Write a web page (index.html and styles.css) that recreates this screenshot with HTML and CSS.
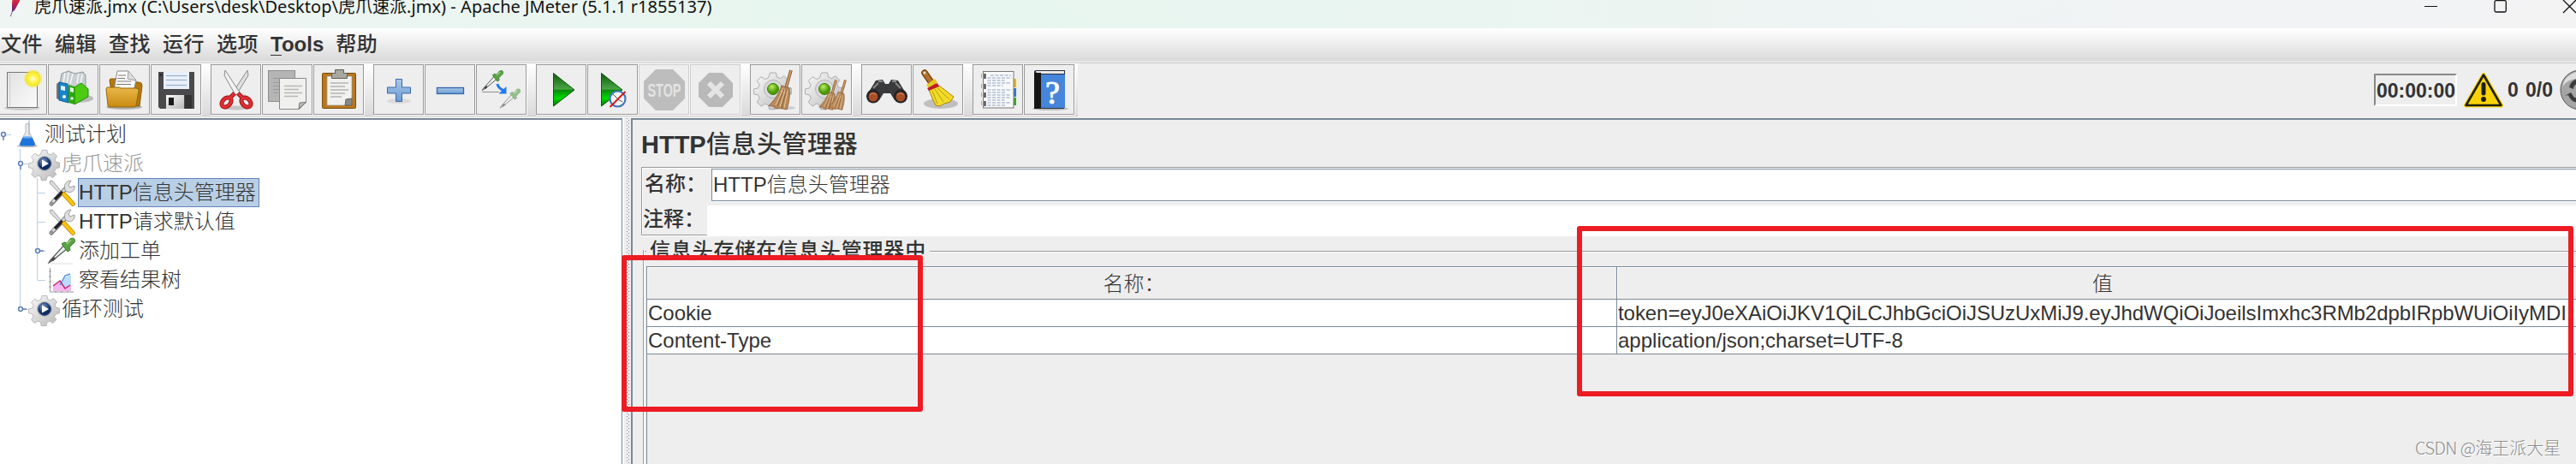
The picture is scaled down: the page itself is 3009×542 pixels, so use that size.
FILE: index.html
```html
<!DOCTYPE html>
<html lang="zh-CN">
<head>
<meta charset="utf-8">
<title>Apache JMeter</title>
<link rel="stylesheet" href="styles.css">
</head>
<body>
<svg width="0" height="0" class="defs">
  <defs>
    <linearGradient id="paper" x1="0" y1="0" x2="1" y2="1"><stop offset="0" stop-color="#e2e2e2"/><stop offset="1" stop-color="#fbfbfb"/></linearGradient>
    <linearGradient id="gold" x1="0" y1="0" x2="0" y2="1"><stop offset="0" stop-color="#e9b84a"/><stop offset="1" stop-color="#c98a10"/></linearGradient>
    <linearGradient id="green" x1="0" y1="0" x2="0" y2="1"><stop offset="0" stop-color="#0d5a0d"/><stop offset=".48" stop-color="#4aa544"/><stop offset=".52" stop-color="#0a8a0a"/><stop offset=".75" stop-color="#00d800"/><stop offset="1" stop-color="#067006"/></linearGradient>
    <linearGradient id="blue" x1="0" y1="0" x2="0" y2="1"><stop offset="0" stop-color="#a9c8ea"/><stop offset="1" stop-color="#6b9bd4"/></linearGradient>
    <linearGradient id="gray" x1="0" y1="0" x2="1" y2="1"><stop offset="0" stop-color="#fafafa"/><stop offset="1" stop-color="#b8b8b8"/></linearGradient>
    <radialGradient id="glow"><stop offset="0" stop-color="#fffff0"/><stop offset=".35" stop-color="#fff650"/><stop offset=".75" stop-color="#f2e630"/><stop offset="1" stop-color="#f2e630" stop-opacity="0"/></radialGradient>
    <radialGradient id="lime" cx=".4" cy=".3"><stop offset="0" stop-color="#b8f060"/><stop offset="1" stop-color="#4c9c08"/></radialGradient>
    <radialGradient id="navy" cx=".4" cy=".3"><stop offset="0" stop-color="#7f9fcc"/><stop offset="1" stop-color="#0f2c62"/></radialGradient>
    <linearGradient id="feather" x1="0" y1="0" x2="0" y2="1"><stop offset="0" stop-color="#e8443a"/><stop offset=".5" stop-color="#c41f4e"/><stop offset="1" stop-color="#5a2a86"/></linearGradient>
    <g id="cog">
      <path d="M-3.500-19h7l1 5 4 1.600 4.300-3 5 5-3 4.300 1.600 4 5 1v7l-5 1-1.600 3-1 1 3 4.300-5 5-4.300-3-4 1.600-1 5h-7l-1-5-4-1.600-4.300 3-5-5 3-4.300-1.600-4-5-1v-6l5-1 1.600-4-3-4.300 5-5 4.300 3 4-1.600z" fill="url(#gray)" stroke="#adadad"/>
      <circle r="10.500" fill="#dadada" stroke="#b4b4b4"/>
    </g>
    <g id="broom">
      <path d="M25 0l-6 21" stroke="#7f532c" stroke-width="3.600"/><path d="M25 0l-6 21" stroke="#d2a06c" stroke-width="1.800"/>
      <path d="M14 18l9 3c1 8 0 16-3 25l-8-2-4 1-4-3-5-.5c7-7 12-14 15-23.500z" fill="#b88a5c" stroke="#84592f" stroke-width=".8"/>
      <path d="M16 21l-9 20M18 22l-6 21M21 23l-4 21M13 24l6 3" stroke="#e8c69c" fill="none"/><path d="M17 22l-8 20M20 22l-6 22" stroke="#79502b" stroke-width=".7" fill="none"/>
    </g>
    <g id="tools">
      <path d="M2 3l3-1 11 13-2 2L3 6z" fill="#ddd" stroke="#8a8a8a" stroke-width=".8"/>
      <path d="M4 29L22 10" stroke="#777" stroke-width="5" stroke-linecap="round"/><path d="M4 28.500L22 10" stroke="#d8d8d8" stroke-width="3" stroke-linecap="round"/>
      <path d="M8 24l9-9" stroke="#222" stroke-width="3.600"/>
      <path d="M20 13c-2-6 1-11 7-11l-3 5 2 3 5-2c1 6-4 9-9 7z" fill="#e0e0e0" stroke="#888" stroke-width=".8"/>
      <path d="M19 18l10 11" stroke="#b88300" stroke-width="5.500" stroke-linecap="round"/><path d="M19 18l10 11" stroke="#fbc40e" stroke-width="4" stroke-linecap="round"/>
      <circle cx="4.500" cy="28" r="1.500" fill="#888"/>
    </g>
    <g id="gearplay">
      <use href="#cog" transform="translate(16 16) scale(.82)"/>
      <circle cx="16" cy="16" r="7.500" fill="url(#navy)" stroke="#3a5688"/><path d="M13 11.500l8 4.500-8 4.500z" fill="#fff"/>
    </g>
    <g id="pipette">
      <path d="M2 28L19 9l4 4L6 27l-5 3z" fill="#e8eeee" stroke="#555" stroke-width="1.200"/>
      <path d="M3 27l4-4 2 2-3 3z" fill="#444"/>
      <path d="M16 8l3-2 3 1 4-5c3-2 7 0 5 4l-6 6 1 3-3 2z" fill="#5aa444" stroke="#397a2c"/><path d="M22 8l5-5" stroke="#a5d890" stroke-width="1.500"/>
    </g>
  </defs>
</svg>

<header class="titlebar">
  <svg class="app-logo" viewBox="0 0 40 33"><path d="M17-6c6 0 8 4 5 9l-5 9-3 2 0-5c0-6 0-11 3-15z" fill="url(#feather)"/><path d="M14.500 13l-2 6" stroke="#5a2a86" stroke-width="1.200" stroke-dasharray="1.500 1"/></svg>
  <h1 class="app-title">虎爪速派.jmx (C:\Users\desk\Desktop\虎爪速派.jmx) - Apache JMeter (5.1.1 r1855137)</h1>
  <svg class="win-buttons" viewBox="2829 0 180 33" fill="none" stroke="#111"><path d="M2832 7.500h15"/><rect x="2914" y=".7" width="13.300" height="13.300" rx="1.500" stroke-width="1.300"/><path d="M2994 0l15 15M3009 0l-15 15" stroke-width="1.300"/></svg>
</header>

<nav class="menubar">
  <span>文件</span><span>编辑</span><span>查找</span><span>运行</span><span>选项</span><span class="latin"><u>T</u>ools</span><span>帮助</span>
</nav>

<div class="toolbar">
  <div class="tools">
  <div class="group first">
    <button class="tool cut"><svg viewBox="0 75 55 59"><ellipse cx="26" cy="126" rx="21" ry="3" fill="#aaa" opacity=".5"/><rect x="8.500" y="84.500" width="35" height="41" fill="url(#paper)" stroke="#777"/><path d="M11.500 86v38" stroke="#ccc"/><circle cx="38.500" cy="92" r="11" fill="url(#glow)"/></svg></button>
    <button class="tool"><svg viewBox="56 75 59 59"><ellipse cx="91" cy="115" rx="18" ry="5" fill="#888" opacity=".5"/><path d="M70 98l2-12 8-3 7 3 10-2 3 4v14l-16 2z" fill="#c9d0d4" stroke="#8d9498"/><path d="M74 97l2-12M78 98l2-13M82 98l3-12M90 97l2-11M94 98l2-11" stroke="#f6f6f6" stroke-width="1.500"/><path d="M66 98l4-3v22l-4-2z" fill="#777"/><path d="M69 96l10 2 1 22-11-3z" fill="#1785cc" stroke="#0e5f99"/><path d="M71 100l5 1v5l-5-1z" fill="#e8f4ff"/><circle cx="75" cy="113" r="2" fill="#fff"/><path d="M80 99l7 2v21l-7-2z" fill="#2aa80e"/><path d="M87 102l8-5 8 7v9l-16 9z" fill="#4dcb10" stroke="#248e0c"/><path d="M82 102l4 1v5l-4-1z" fill="#eaffdf"/><circle cx="84" cy="115" r="1.800" fill="#eaffdf"/></svg></button>
    <button class="tool"><svg viewBox="116 75 59 59"><ellipse cx="145" cy="125" rx="21" ry="3" fill="#888" opacity=".6"/><path d="M128 94q0-2 2-2h10l3 4h19q4 0 4 4l-3 24h-30z" fill="#b3790e" stroke="#8a5c08"/><path d="M137 83h13l9 11-3 12h-23z" fill="#fcfcfc" stroke="#888"/><path d="M150 83l-1 9 9 2" fill="#ddd" stroke="#999"/><path d="M138 88h9M137 91.500h9M137 95h16M136 98.500h17" stroke="#777"/><path d="M124 104q0-2 2-2h12q2 0 3 1h18q3 0 3 3l-3 17q0 2-2 2h-29q-2 0-2-2z" fill="url(#gold)" stroke="#94650b"/></svg></button>
    <button class="tool"><svg viewBox="176 75 59 59"><path d="M185 84h42v43h-40l-2-2z" fill="#4a4a4d"/><path d="M191 84h30v20h-30z" fill="#e8eff8"/><path d="M194 88.500h24M194 93.500h24M194 99.500h24" stroke="#8ea9c8"/><path d="M194 111h21v16h-21z" fill="url(#gray)"/><path d="M197 114h6v9h-6z" fill="#1b1b1b"/><path d="M216 111h8v16h-8z" fill="#333"/><path d="M186.500 86.500h3v2h-3z" fill="#222"/></svg></button>
  </div>
  <div class="group">
    <button class="tool"><svg viewBox="246 75 59 59"><ellipse cx="276" cy="126" rx="14" ry="2.500" fill="#aaa" opacity=".6"/><path d="M289 82l1 6-14 23-4-3z" fill="#dfe1e1" stroke="#8a8a8a"/><path d="M263 82l-1 6 13 23 5-3z" fill="#f2f2f2" stroke="#8a8a8a"/><g fill="none" stroke="#a30f14" stroke-width="5"><ellipse cx="264.500" cy="119.500" rx="4.500" ry="6.500" transform="rotate(45 264.500 119.500)"/><ellipse cx="287.500" cy="119.500" rx="4.500" ry="6.500" transform="rotate(-45 287.500 119.500)"/><path d="M269 114l5-5M283 114l-5-5"/></g><g fill="none" stroke="#e03034" stroke-width="3"><ellipse cx="264.500" cy="119.500" rx="4.500" ry="6.500" transform="rotate(45 264.500 119.500)"/><ellipse cx="287.500" cy="119.500" rx="4.500" ry="6.500" transform="rotate(-45 287.500 119.500)"/><path d="M269 114l5-5M283 114l-5-5"/></g></svg></button>
    <button class="tool"><svg viewBox="306 75 59 59"><rect x="313.500" y="82.500" width="31" height="36" fill="#b5b5b5" stroke="#8d8d8d"/><path d="M319 91.500h8M319 96.500h8M319 100.500h7M319 104.500h7M319 108.500h6" stroke="#999"/><path d="M326.500 91.500h31v28l-8 8h-23z" fill="#f0f0ee" stroke="#888"/><path d="M332 100.500h21M332 104.500h17M332 108.500h21M332 112.500h16" stroke="#b8b8b8" stroke-width="1.500"/><path d="M349 127l1-7 7.500-.5z" fill="#bbb" stroke="#777"/></svg></button>
    <button class="tool"><svg viewBox="366 75 59 59"><rect x="376.500" y="85.500" width="39" height="41" rx="1" fill="#b9771e" stroke="#7a4c0c"/><path d="M382 89h29v28l-7 6h-22z" fill="#f1f1ef" stroke="#999" stroke-width=".7"/><path d="M386 97h21M386 101h17M386 105h21M386 109h17M386 113h13" stroke="#b4b4b4" stroke-width="1.500"/><path d="M403 123l1-7 7-1v8z" fill="#888" stroke="#666"/><path d="M387.500 91.500v-6h4v-4h10v4h4v6z" fill="#a8a8a0" stroke="#5e5e58"/></svg></button>
  </div>
  <div class="group">
    <button class="tool"><svg viewBox="436 75 59 59"><ellipse cx="466" cy="118" rx="14" ry="3" fill="#bbb" opacity=".4"/><path d="M462.500 92.500h7v9.500h10v7h-10v9.500h-7v-9.500h-10v-7h10z" fill="url(#blue)" stroke="#3a68a8"/></svg></button>
    <button class="tool"><svg viewBox="496 75 59 59"><rect x="510.500" y="102.500" width="31" height="7" fill="url(#blue)" stroke="#3566a8" stroke-width="1.300"/></svg></button>
    <button class="tool"><svg viewBox="556 75 59 59"><path d="M563 107.500h20" stroke="#777" stroke-width=".8"/><use href="#pipette" transform="translate(562.500 81.500) scale(.8)"/><use href="#pipette" transform="translate(583.500 103) scale(.77)" opacity=".6"/><path d="M581 98q1 5 7 7.500" stroke="#1f7af0" stroke-width="3" fill="none"/><path d="M591.500 101v8.500h-9z" fill="#1f7af0"/></svg></button>
  </div>
  <div class="group">
    <button class="tool"><svg viewBox="626 75 59 59"><path d="M646.500 85.500l24.500 19.500-24.500 19z" fill="url(#green)" stroke="#0a5a0a"/></svg></button>
    <button class="tool"><svg viewBox="686 75 59 59"><path d="M702.500 85.500l24.500 19.500-24.500 19z" fill="url(#green)" stroke="#0a5a0a"/><circle cx="721.500" cy="115.500" r="9" fill="#f3f3f3" stroke="#3f77bb" stroke-width="2.200"/><path d="M716 110l6 6 5 3" stroke="#555" fill="none"/><path d="M712.500 125l18-18" stroke="#d91212" stroke-width="1.800"/></svg></button>
    <button class="tool off"><svg viewBox="746 75 59 59"><path d="M766 81h20l14 14v20l-14 14h-20l-14-14v-20z" fill="#bdbdbd"/><text x="776" y="113" text-anchor="middle" textLength="39" lengthAdjust="spacingAndGlyphs" class="stop">STOP</text></svg></button>
    <button class="tool off"><svg viewBox="806 75 59 59"><path d="M828 85h16l12 12v16l-12 12h-16l-12-12v-16z" fill="#b9b9b9"/><path d="M828 97l16 16M844 97l-16 16" stroke="#e4e4e4" stroke-width="6"/></svg></button>
  </div>
  <div class="group">
    <button class="tool"><svg viewBox="876 75 59 59"><use href="#cog" transform="translate(903 104)"/><circle cx="903" cy="104" r="6.500" fill="url(#lime)" stroke="#3d7d08"/><ellipse cx="916" cy="126" rx="13" ry="2" fill="#999" opacity=".4"/><use href="#broom" transform="translate(899 82)"/></svg></button>
    <button class="tool"><svg viewBox="936 75 59 59"><use href="#cog" transform="translate(963 104)"/><circle cx="963" cy="104" r="6.500" fill="url(#lime)" stroke="#3d7d08"/><use href="#broom" transform="translate(957.500 93.500) scale(.76)"/><use href="#broom" transform="translate(968.500 93.500) scale(.76)"/></svg></button>
  </div>
  <div class="group">
    <button class="tool"><svg viewBox="1006 75 59 59"><path d="M1012 112l11-18 8-1 3 5h4l3-5 8 1 11 18-3 7-12-2-5-8h-8l-5 8-12 2z" fill="#3a3a3d"/><path d="M1026 95l5 0M1042 95l5 0M1020 103l6-6M1052 103l-6-6" stroke="#888" stroke-width="2"/><circle cx="1020" cy="112.500" r="8" fill="#242426"/><circle cx="1052" cy="112.500" r="8" fill="#242426"/><circle cx="1020" cy="113" r="5.500" fill="#a94e26"/><circle cx="1052" cy="113" r="5.500" fill="#a94e26"/><path d="M1016 111q4-4 8 0M1048 111q4-4 8 0" stroke="#d98a60" fill="none"/></svg></button>
    <button class="tool"><svg viewBox="1066 75 59 59"><ellipse cx="1099" cy="121" rx="20" ry="6" fill="#999" opacity=".55"/><path d="M1080 85l9 13" stroke="#704010" stroke-width="7.500" stroke-linecap="round"/><path d="M1080 85l9 13" stroke="#b4702a" stroke-width="5" stroke-linecap="round"/><path d="M1082 99l10-7 3 4-10 7z" fill="#e8c820"/><path d="M1085 105l12-5 17 13-4 6-7 2-5 3-5-1-3-6z" fill="#f2dc28" stroke="#a8860a"/><path d="M1089 106l6 15M1092 104l10 15M1095 103l14 13" stroke="#b99a10"/><path d="M1083 103l12-6 2 4-12 5z" fill="#c01a28"/><circle cx="1080" cy="85" r="1.500" fill="#f6e8d0"/></svg></button>
  </div>
  <div class="group">
    <button class="tool"><svg viewBox="1136 75 59 59"><path d="M1184 92h3v10h-3z" fill="#edb414"/><path d="M1184 103h3v10h-3z" fill="#2c7be0"/><path d="M1184 114h3v9h-3z" fill="#2eac22"/><rect x="1148.500" y="83.500" width="35.500" height="42.500" fill="#f8f8f8" stroke="#777"/><path d="M1157 88h24M1153.500 91h28M1153.500 94h20M1153.500 97h27M1153.500 100h18M1153.500 105h28M1153.500 108h22M1153.500 111h27M1153.500 114h26M1153.500 117h20M1153.500 120h27M1153.500 123h22" stroke="#8ba1c2" stroke-dasharray="4 1.500" stroke-width="1"/><path d="M1150.500 86v6M1150.500 98v6M1150.500 108v6M1150.500 118v6" stroke="#333" stroke-width="2"/><path d="M1146.500 86v5M1146.500 98v5M1146.500 108v5M1146.500 118v5" stroke="#aaa"/></svg></button>
    <button class="tool"><svg viewBox="1196 75 59 59"><ellipse cx="1227" cy="127" rx="21" ry="2" fill="#999" opacity=".6"/><path d="M1208 83l2-1h34v4l-1 41h-35z" fill="#26303e"/><path d="M1210 83h33v3h-32z" fill="#e9e9e9"/><path d="M1216 87h28v39h-28z" fill="#4585da"/><path d="M1208 85h8v42h-8z" fill="#161616"/><text x="1229.500" y="121" text-anchor="middle" class="qmark">?</text></svg></button>
  </div>
  </div>
  <div class="status">
    <span class="timer">00:00:00</span>
    <svg class="warn" viewBox="2877 84 48 44"><path d="M2901 88.500l20.500 35.500h-41z" fill="#fbd305" stroke="#fbd305" stroke-width="5" stroke-linejoin="round"/><path d="M2901 88.500l20.500 35.500h-41z" fill="#fbd305" stroke="#1f1f12" stroke-width="2.600" stroke-linejoin="round"/><path d="M2901 99.500v10.500" stroke="#1f1f12" stroke-width="5" stroke-linecap="round"/><circle cx="2901" cy="117" r="3" fill="#1f1f12"/></svg>
    <span class="count">0</span><span class="count threads">0/0</span>
    <svg class="remote" viewBox="2990 81 19 50"><circle cx="3014" cy="106" r="23" fill="#a5a5a5" stroke="#555"/><path d="M3009 85q-14 5-16 17 6-8 16-9z" fill="#ddd"/><path d="M3001 103q1-7 9-10v6q-4 2-4 6zM3003 109l4 6h4v6q-8-1-11-9l-4 1z" fill="#3c3c3c"/></svg>
  </div>
</div>

<main class="workspace">
  <aside class="tree">
    <svg class="lines" viewBox="0 140 100 240" fill="none" stroke="#b8cfe5"><path d="M7 157.500h6M23.500 174v187M27 191.500h6M43.500 208v119M43.500 225.500h9.500M43.500 259.500h9.500M43.500 293.500h10M43.500 327.500h9.500M27 361.500h6"/><g stroke="#5c7db8" stroke-width="1.500"><circle cx="4" cy="157" r="2.400" fill="#fff"/><path d="M4 159.500v4.500"/><circle cx="24" cy="191" r="2.400" fill="#fff"/><path d="M24 193.500v4.500"/><circle cx="44" cy="293" r="2.400" fill="#fff"/><path d="M46.500 293h4.500"/><circle cx="24" cy="361" r="2.400" fill="#fff"/><path d="M26.500 361h4.500"/></g></svg>
    <div class="node lv1"><svg viewBox="0 0 32 32"><ellipse cx="16" cy="29.500" rx="12" ry="1.500" fill="#aaa"/><path d="M14 4l4-1v10l7 14q1 3-2 3H9q-3 0-2-3l7-14z" fill="#e6eaee" stroke="#b4b8bc"/><path d="M10.500 19.500h11l3.500 8q0 2-2 2H9q-2 0-2-2z" fill="#1f74dc"/><ellipse cx="16" cy="19.500" rx="5.500" ry="1.200" fill="#69a8f0"/><path d="M18-1v18" stroke="#a4b0bb"/></svg><span>测试计划</span></div>
    <div class="node lv2 disabled"><svg viewBox="0 0 32 32"><use href="#gearplay"/></svg><span>虎爪速派</span></div>
    <div class="node lv3 selected"><svg viewBox="0 0 32 32"><use href="#tools"/></svg><span>HTTP信息头管理器</span></div>
    <div class="node lv3"><svg viewBox="0 0 32 32"><use href="#tools"/></svg><span>HTTP请求默认值</span></div>
    <div class="node lv3"><svg viewBox="0 0 32 32"><path d="M3 31h26" stroke="#ddd"/><use href="#pipette"/></svg><span>添加工单</span></div>
    <div class="node lv3"><svg viewBox="0 0 32 32"><path d="M2.500 2v28H30M1 6h3M1 12h3M1 18h3M1 24h3M9 28v3M16 28v3M23 28v3" stroke="#999" fill="none"/><path d="M13 21l7-8 7-3v19H13z" fill="#bcdcff"/><path d="M6 23l8-5 6 8 7-5v8H6z" fill="#f6b6ee"/><path d="M14 22l6-11 6-2" stroke="#4c8fe8" fill="none" stroke-width="1.500"/><path d="M6 23l8-6 6 9 6-4" stroke="#c02872" fill="none" stroke-width="1.500"/></svg><span>察看结果树</span></div>
    <div class="node lv2"><svg viewBox="0 0 32 32"><use href="#gearplay"/></svg><span>循环测试</span></div>
  </aside>
  <div class="splitter"></div>
  <section class="panel">
    <h2 class="panel-title">HTTP<span>信息头管理器</span></h2>
    <div class="form">
      <div class="field"><label>名称：</label><div class="input">HTTP信息头管理器</div></div>
      <div class="field comment"><label>注释：</label><div class="input"></div></div>
    </div>
    <div class="store">
      <div class="legend"><i class="stub"></i><span>信息头存储在信息头管理器中</span><i class="rule"></i></div>
      <div class="store-body">
        <div class="grid">
          <div class="th name">名称：</div><div class="th">值</div>
          <div class="td">Cookie</div><div class="td token">token=eyJ0eXAiOiJKV1QiLCJhbGciOiJSUzUxMiJ9.eyJhdWQiOiJoeilsImxhc3RMb2dpbIRpbWUiOiIyMDI.</div>
          <div class="td">Content-Type</div><div class="td">application/json;charset=UTF-8</div>
        </div>
      </div>
    </div>
  </section>
</main>
<div class="mark mark-names"></div>
<div class="mark mark-values"></div>
<div class="watermark">CSDN @<span>海王派大星</span></div>
</body>
</html>
```
FILE: styles.css
```css
* { box-sizing: border-box; }
body {
  margin: 0; width: 3009px; height: 542px; overflow: hidden; position: relative;
  display: flex; flex-direction: column; background: #eee; color: #333;
  font: 300 24px/34px "Liberation Sans", "Noto Sans CJK SC", sans-serif;
}
svg { display: block; }
.defs { position: absolute; }

.titlebar {
  height: 33px; flex: none; display: flex; align-items: flex-start; overflow: hidden;
  background: linear-gradient(90deg, #eff5f3 0, #ebf5f1 500px, #e7f6ef 1000px, #eaf5f1 1700px, #f1f3f5 2500px, #f3f3f4 3009px);
}
.app-logo { width: 40px; height: 33px; flex: none; }
.app-title {
  margin: -8px auto 0 0; white-space: nowrap; color: #111; letter-spacing: .04px;
  font: 400 20px/32px "Noto Sans", "Noto Sans CJK SC", sans-serif;
}
.win-buttons { width: 180px; height: 33px; flex: none; }

.menubar {
  height: 41px; flex: none; display: flex; gap: 14px; padding: 1px 0 0 1px; line-height: 36px;
  background: linear-gradient(#fff 0, #dadada 38px, #eee 39px); border-bottom: 1px solid #ccc;
  font-weight: 500; letter-spacing: .5px;
}
.menubar .latin { font-weight: 700; letter-spacing: 0; }
.menubar u { text-decoration-thickness: 1px; text-underline-offset: 4px; }

.toolbar { height: 64px; flex: none; display: flex; justify-content: space-between; background: #eee; }
.tools { display: flex; height: 62px; border-bottom: 1px solid #ccc; background: linear-gradient(#fff, #dadada); padding-right: 3px; gap: 10px; }
.group { display: flex; gap: 1px; background: #fff; height: 61px; padding-right: 1px; }
.tool { width: 59px; height: 59px; margin: 1px 0 0; padding: 0; border: 1px solid #999; background: #eee; overflow: hidden; }
.tool svg { width: 59px; height: 59px; margin: -1px; }
.tool.cut { width: 55px; border-left: 0; }
.tool.cut svg { width: 55px; margin-left: 0; }
.tool.off { border-color: #ccc; }
.stop { font: 700 22px "Liberation Sans", sans-serif; fill: #e3e3e3; }
.qmark { font: 400 38px "Liberation Serif", serif; fill: #fff; stroke: #fff; }
.status { display: flex; align-items: center; height: 62px; font-weight: 700; font-size: 23px; }
.timer { width: 97px; height: 38px; line-height: 37px; padding-left: 1px; white-space: nowrap; border: 2px solid; border-color: #888 #fff #fff #888; }
.warn { width: 48px; height: 44px; margin-left: 7px; }
.count { margin-left: 4px; width: 13px; }
.count.threads { margin-left: 8px; width: 40px; }
.remote { width: 19px; height: 50px; }

.workspace { flex: 1; display: flex; min-height: 0; }
.tree { position: relative; width: 727px; flex: none; background: #fff; border-top: 2px solid #7a8a99; border-right: 1px solid #7a8a99; }
.lines { position: absolute; left: 0; top: 0; width: 100px; height: 240px; }
.node { position: relative; display: flex; align-items: center; height: 34px; white-space: nowrap; gap: 3px; }
.node svg { width: 32px; height: 32px; flex: none; overflow: visible; }
.node span { height: 34px; line-height: 32px; padding: 0 3px 0 0; border: 1px solid transparent; }
.lv1 { padding-left: 16px; } .lv2 { padding-left: 36px; } .lv3 { padding-left: 56px; }
.disabled span { color: #999; }
.selected span { background: #b8cfe5; border-color: #6382bf; }
.splitter {
  width: 10px; flex: none; border-left: 2px solid #fff;
  background:
    radial-gradient(circle at .5px .5px, #7a8a99 .7px, transparent .8px) 3px 0/4px 4px repeat-y,
    radial-gradient(circle at .5px .5px, #7a8a99 .7px, transparent .8px) 5px 2px/4px 4px repeat-y, #eee;
}
.panel { flex: 1; min-width: 0; border: 2px solid #7a8a99; border-right: 0; border-bottom: 0; padding: 0 0 0 10px; display: flex; flex-direction: column; }
.panel-title { margin: 8px 0 0; height: 47px; font: 700 29px/42px "Liberation Sans", "Noto Sans CJK SC", sans-serif; }
.panel-title span { font-weight: 500; letter-spacing: .6px; }
.form { height: 80px; flex: none; border: 1px solid #999; border-right: 0; box-shadow: inset 1px 1px #fff, 0 1px #fff; padding-top: 1px; }
.field { display: flex; height: 38px; line-height: 36px; }
.field label { width: 81px; padding-left: 3px; font-weight: 500; white-space: nowrap; }
.field .input { flex: 1; background: #fff; border: 1px solid #7a8a99; border-right: 0; padding-left: 1px; box-shadow: 0 1px #fff; }
.comment { margin-top: 5px; height: 34px; line-height: 32px; }
.comment label { width: 76px; padding-left: 1px; }
.comment .input { border: 0; }
.store { flex: 1; display: flex; flex-direction: column; padding-left: 2px; }
.legend { display: flex; height: 34px; margin: 1px 0 -18px; line-height: 34px; font-weight: 500; letter-spacing: .85px; }
.stub { width: 4px; height: 1px; background: #999; margin: 17px 4px 0 0; }
.rule { flex: 1; height: 2px; background: #999; background: linear-gradient(#999 1px, #fff 1px); margin: 17px 0 0 4px; }
.store-body { flex: 1; border-left: 1px solid #999; box-shadow: inset 1px 0 #fff; padding: 19px 0 0 3px; }
.grid { display: grid; grid-template-columns: 1133px 1135px; grid-template-rows: 38px 32px 32px; height: 100%; border: 1px solid #7a8a99; border-bottom: 0; width: 2300px; }
.th { text-align: center; line-height: 39px; border-bottom: 1px solid #7a8a99; border-right: 1px solid #7a8a99; box-shadow: inset 1px 1px #fff; }
.th.name { padding-left: 5px; }
.td { background: #fff; line-height: 31px; padding-left: 1px; border-bottom: 1px solid #7a8a99; border-right: 1px solid #7a8a99; white-space: nowrap; }
.token { letter-spacing: -.06px; }

.mark { position: absolute; border: 6px solid #ed1c24; border-radius: 3px; }
.mark-names { left: 726px; top: 298px; width: 352px; height: 183px; }
.mark-values { left: 1842px; top: 264px; width: 1164px; height: 199px; }
.watermark { position: absolute; left: 2821px; top: 508px; font: 300 20px/30px "Noto Sans CJK SC", sans-serif; letter-spacing: -.6px; color: #8c8c8c; text-shadow: 1px 1px #fff; white-space: nowrap; }
.watermark span { letter-spacing: 0; }
```
